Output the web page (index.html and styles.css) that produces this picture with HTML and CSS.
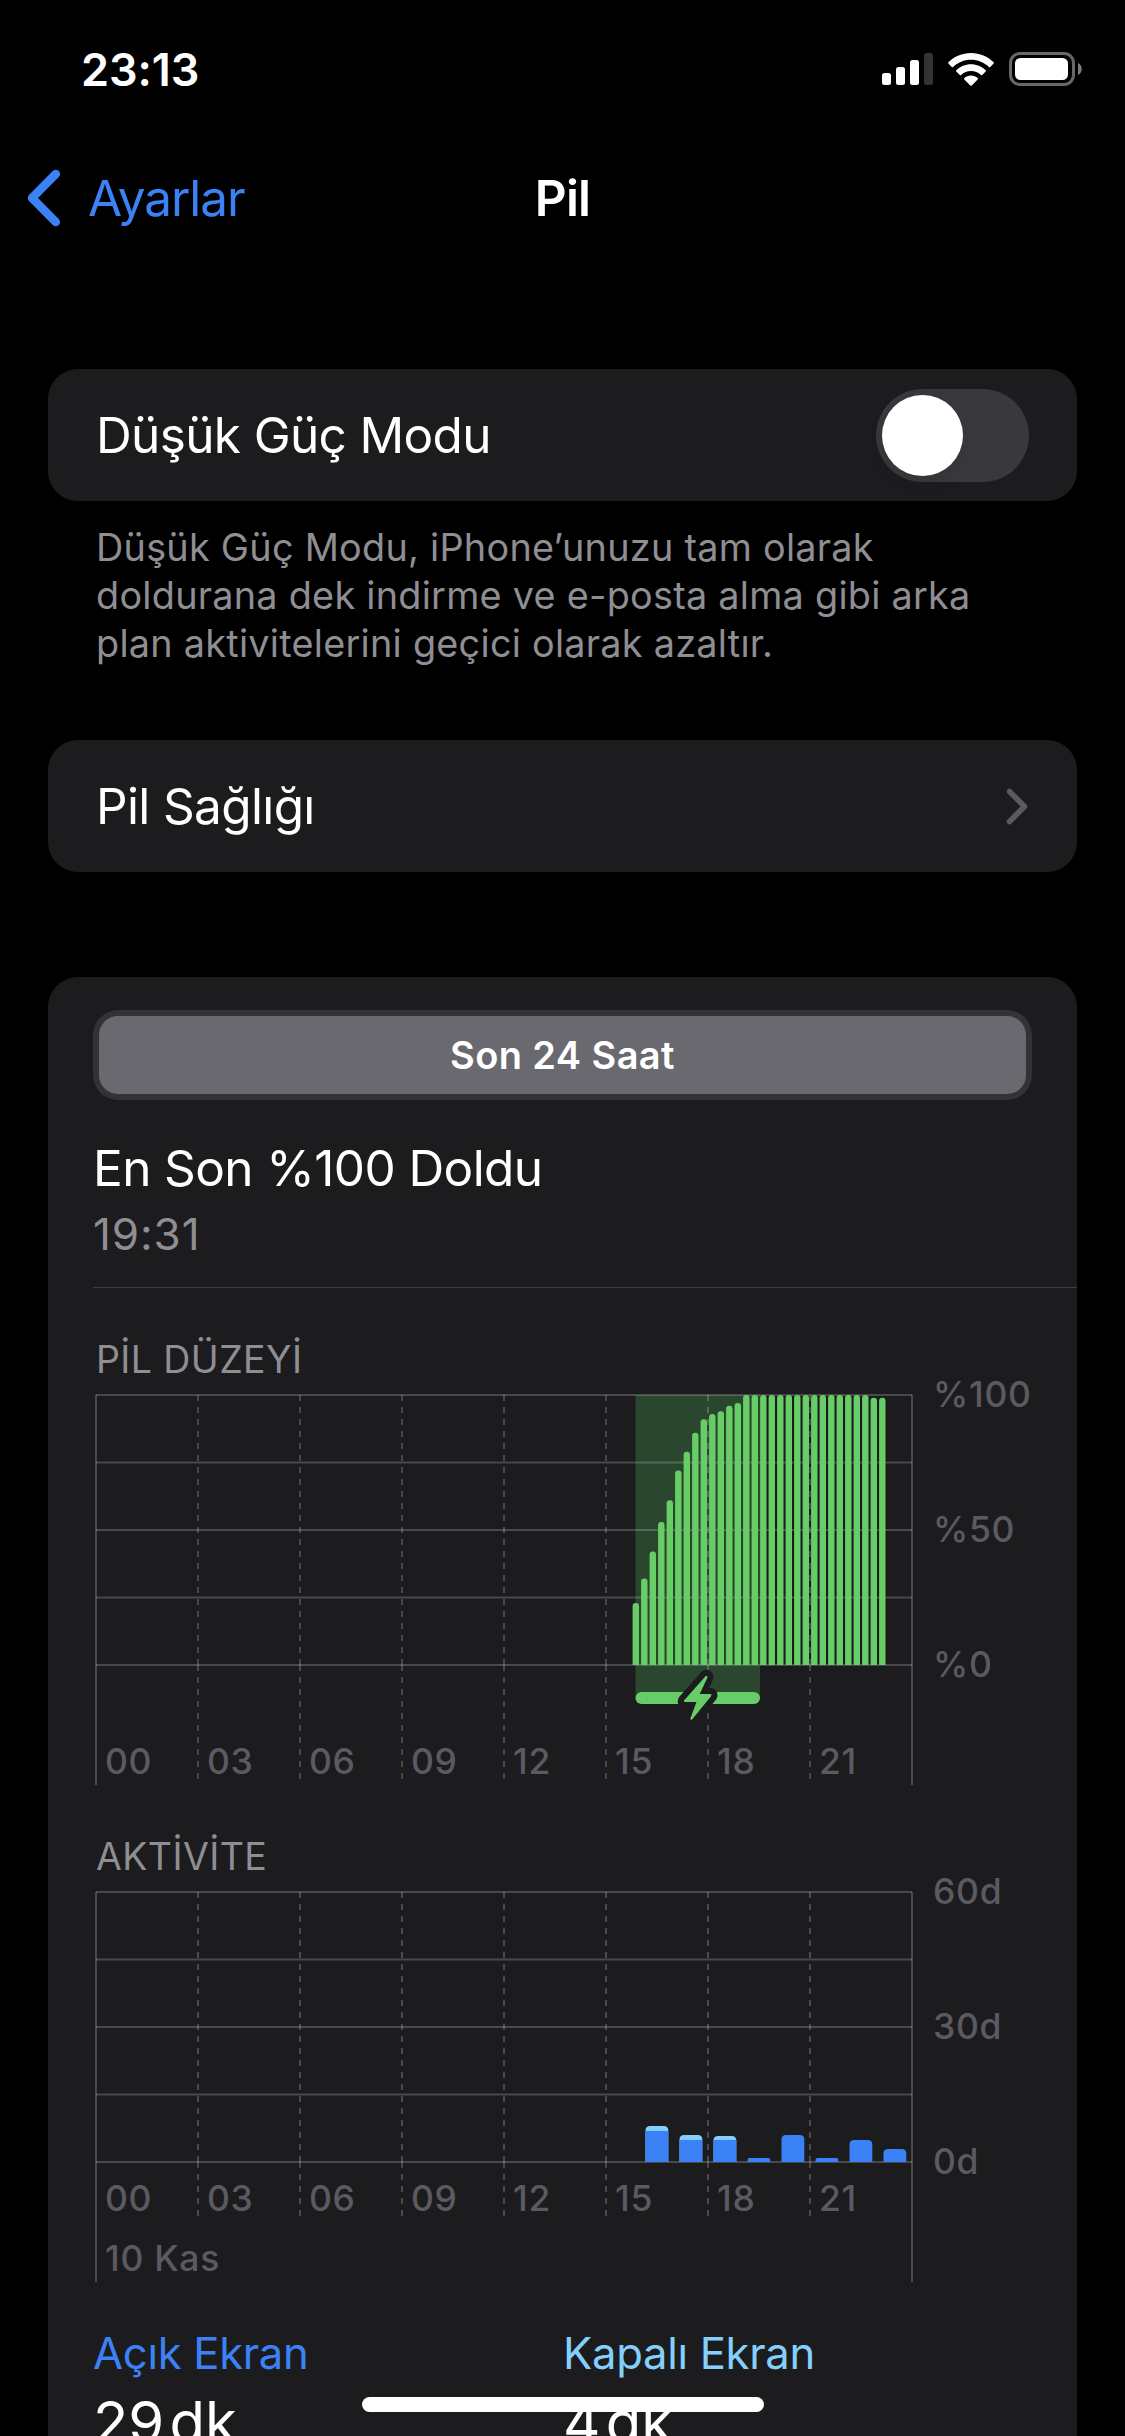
FILE: index.html
```html
<!DOCTYPE html>
<html lang="tr">
<head>
  <meta charset="UTF-8" />
  <title>Pil</title>
  <meta name="viewport" content="width=device-width, initial-scale=1.0" />
  <link rel="stylesheet" href="styles.css">
</head>
<body>
  <header class="status-bar">
    <span class="time">23:13</span>
    <div class="status-icons">
      <svg class="signal" width="51" height="32" viewBox="0 0 51 32" fill="#fff">
        <rect x="0" y="20" width="9" height="12" rx="2.5" />
        <rect x="14" y="14" width="9" height="18" rx="2.5" />
        <rect x="28" y="7" width="9" height="25" rx="2.5" />
        <rect x="42" y="0" width="9" height="32" rx="2.5" fill="#333" />
      </svg>
      <svg class="wifi" width="46" height="33" viewBox="0 0 46 33" fill="#fff">
        <path d="M23 0C31.800 0 39.800 3.500 45.600 9.200Q46.200 9.900 45.600 10.600L42.300 13.900Q41.600 14.500 40.900 13.900C36.200 9.400 30 6.700 23 6.700S9.800 9.400 5.100 13.900Q4.400 14.500 3.700 13.900L.4 10.600Q-.2 9.900.4 9.200C6.200 3.500 14.200 0 23 0Z" />
        <path d="M23 11.200C28.700 11.200 33.900 13.500 37.700 17.200Q38.300 17.900 37.700 18.500L34.200 22Q33.600 22.500 32.900 22C30.300 19.500 26.800 18 23 18S15.700 19.500 13.100 22Q12.400 22.500 11.800 22L8.300 18.500Q7.700 17.900 8.300 17.200C12.100 13.500 17.300 11.200 23 11.200Z" />
        <path d="M23 22.500C25.600 22.500 28 23.500 29.700 25.100Q30.300 25.800 29.700 26.400L23.700 32.500Q23 33.100 22.300 32.500L16.300 26.400Q15.700 25.800 16.300 25.100C18 23.500 20.400 22.500 23 22.500Z" />
      </svg>
      <svg class="battery" width="73" height="34" viewBox="0 0 73 34">
        <rect x="1.500" y="1.500" width="63" height="31" rx="9.500" fill="none" stroke="#686868" stroke-width="3" />
        <rect x="6" y="6" width="53" height="22" rx="5.500" fill="#fff" />
        <path d="M69 11C74 13 74 21 69 23Z" fill="#7a7a7a" />
      </svg>
    </div>
  </header>

  <nav class="nav-bar">
    <a class="back">
      <svg width="34" height="58" viewBox="0 0 34 58">
        <path d="M28.800 5L5 29L28.800 53" fill="none" stroke="#3c82f7" stroke-width="8.500" stroke-linecap="round" stroke-linejoin="round" />
      </svg>
      <span>Ayarlar</span>
    </a>
    <h1>Pil</h1>
  </nav>

  <main>
    <section class="card row">
      <span class="row-title">Düşük Güç Modu</span>
      <span class="switch"><span class="knob"></span></span>
    </section>
    <p class="footnote">Düşük Güç Modu, iPhone’unuzu tam olarak<br>doldurana dek indirme ve e-posta alma gibi arka<br>plan aktivitelerini geçici olarak azaltır.</p>

    <section class="card row">
      <span class="row-title">Pil Sağlığı</span>
      <svg class="chevron" width="22" height="37" viewBox="0 0 22 37">
        <path d="M3.500 3.500L18.500 18.500L3.500 33.500" fill="none" stroke="#5a5a5f" stroke-width="5.500" stroke-linecap="round" stroke-linejoin="round" />
      </svg>
    </section>

    <section class="card usage">
      <div class="segmented"><div class="segment">Son 24 Saat</div></div>

      <div class="last-charge">
        <div class="charge-title">En Son %100 Doldu</div>
        <div class="charge-time">19:31</div>
      </div>

      <h2 class="level-title">PİL DÜZEYİ</h2>
      <svg class="chart" id="levelChart" width="984" height="405" viewBox="0 0 984 405"></svg>

      <h2 class="activity-title">AKTİVİTE</h2>
      <svg class="chart" id="activityChart" width="984" height="405" viewBox="0 0 984 405"></svg>

      <div class="totals">
        <div class="total screen-on">
          <div class="total-label">Açık Ekran</div>
          <div class="total-value">29&#8202;dk</div>
        </div>
        <div class="total screen-off">
          <div class="total-label">Kapalı Ekran</div>
          <div class="total-value">4&#8202;dk</div>
        </div>
      </div>
    </section>
  </main>

  <div class="home-indicator"></div>

  <script>
    const LEFT = 3, TOP = 15, WIDTH = 816, HEIGHT = 270;
    const STEP = WIDTH / 8;
    const BASE = TOP + HEIGHT;

    // one value per 15 minutes, starting at 15:45
    const levels = [23, 32, 42, 53, 61, 72, 79, 86, 91, 93, 94, 96, 97,
      100, 100, 100, 100, 100, 100, 100, 100, 100, 100, 100, 100, 100, 100, 100, 99, 99];

    // minutes per hour from 16:00: [screen on, screen off]
    const activity = [[6.9, 1.1], [4.9, 1.1], [4.9, 0.9], [0.9, 0], [6, 0], [0.9, 0], [4.9, 0], [2.9, 0]];

    function grid(labels, dashEnd, sideEnd, hourY) {
      let out = "";
      for (let i = 0; i <= 4; i++) {
        const y = TOP + i * HEIGHT / 4;
        out += `<line class="grid" x1="${LEFT}" x2="${LEFT + WIDTH}" y1="${y}" y2="${y}" />`;
      }
      for (let i = 0; i <= 8; i++) {
        const x = LEFT + i * STEP;
        if (i === 0 || i === 8) {
          out += `<line class="grid" x1="${x}" x2="${x}" y1="${TOP}" y2="${sideEnd}" />`;
        } else {
          out += `<line class="grid dashed" x1="${x}" x2="${x}" y1="${TOP}" y2="${BASE}" />`;
          out += `<line class="grid dashed" x1="${x}" x2="${x}" y1="${BASE}" y2="${dashEnd}" />`;
        }
        if (i < 8) {
          const hour = String(i * 3).padStart(2, "0");
          out += `<text class="axis" x="${x + 9}" y="${hourY}">${hour}</text>`;
        }
      }
      labels.forEach((label, i) => {
        out += `<text class="axis" x="840" y="${TOP + 12 + i * HEIGHT / 2}">${label}</text>`;
      });
      return out;
    }

    function topRounded(x, y, w, h, r, cls) {
      return `<path class="${cls}" d="M${x} ${y + h}V${y + r}Q${x} ${y} ${x + r} ${y}H${x + w - r}Q${x + w} ${y} ${x + w} ${y + r}V${y + h}Z" />`;
    }

    function drawLevels() {
      let out = `<rect class="charging" x="542.5" y="${TOP}" width="124.5" height="303" />`;
      out += grid(["%100", "%50", "%0"], 399, 405, 394);
      levels.forEach((v, i) => {
        const h = v / 100 * HEIGHT;
        out += topRounded(539.6 + i * 8.5, BASE - h, 6.4, h, 3, "level");
      });
      out += `<rect class="level" x="542.5" y="312" width="124.5" height="12" rx="6" />`;
      const bolt = "M612.500 296.300L591 320.500Q590.200 322 592 322H603.500L597.400 338.500Q597.500 340.600 599.300 339.200L618.200 316Q619.200 314.200 617.300 314H606.700L614.500 297.500Q614.500 295 612.500 296.300Z";
      out += `<path class="bolt-outline" d="${bolt}" /><path class="level" d="${bolt}" />`;
      document.getElementById("levelChart").innerHTML = out;
    }

    function drawActivity() {
      let out = grid(["60d", "30d", "0d"], 339, 405, 334);
      activity.forEach(([on, off], i) => {
        const x = 552.5 + i * 34;
        const onH = on * 4.5;
        const total = (on + off) * 4.5;
        out += topRounded(x, BASE - total, 22.8, total, Math.min(4.5, total / 2), off ? "off" : "on");
        if (off) out += `<rect class="on" x="${x}" y="${BASE - onH}" width="22.8" height="${onH}" />`;
      });
      out += `<text class="axis" x="${LEFT + 9}" y="394">10 Kas</text>`;
      document.getElementById("activityChart").innerHTML = out;
    }

    drawLevels();
    drawActivity();
  </script>
</body>
</html>
```

FILE: styles.css
```css
* { box-sizing: border-box; }

html, body {
  margin: 0;
  padding: 0;
  background: #000;
  color: #fff;
  font-family: Inter, "Liberation Sans", sans-serif;
}

body {
  width: 1125px;
  height: 2436px;
  overflow: hidden;
  position: relative;
}

svg { display: block; flex: none; overflow: visible; }

.status-bar {
  height: 138px;
  display: flex;
  justify-content: space-between;
  align-items: center;
  padding: 0 43px 0 81px;
}

.time {
  font-size: 45px;
  font-weight: 600;
  letter-spacing: -0.1px;
}

.status-icons {
  display: flex;
  align-items: center;
}

.wifi { margin-left: 15px; }
.battery { margin-left: 15px; }

.nav-bar {
  height: 120px;
  display: grid;
  grid-template-columns: 1fr auto 1fr;
  align-items: center;
  padding: 0 27px;
  font-size: 49.5px;
}

.back {
  display: flex;
  align-items: center;
  gap: 27px;
  color: #3c82f7;
  letter-spacing: -1.05px;
}

h1 {
  margin: 0;
  font-size: 49.5px;
  font-weight: 600;
  letter-spacing: -0.8px;
}

main {
  padding: 111px 48px 0;
}

.card {
  background: #1c1c1e;
  border-radius: 30px;
}

.row {
  height: 132px;
  display: flex;
  align-items: center;
  justify-content: space-between;
  padding: 0 48px;
}

.row-title {
  font-size: 49.5px;
  letter-spacing: -0.64px;
}

.chevron { margin-right: 1px; }

.switch {
  width: 153px;
  height: 93px;
  padding: 6px;
  border-radius: 47px;
  background: #39393d;
}

.knob {
  display: block;
  width: 81px;
  height: 81px;
  border-radius: 50%;
  background: #fff;
  box-shadow: 0 6px 16px rgba(0, 0, 0, 0.08);
}

.footnote {
  margin: 22px 0 0;
  padding: 0 48px;
  height: 217px;
  font-size: 37.8px;
  line-height: 48px;
  letter-spacing: 0.26px;
  color: #8e8e93;
  white-space: nowrap;
}

.usage {
  margin-top: 105px;
  height: 1600px;
  padding: 33px 0 0 45px;
}

.segmented {
  width: 939px;
  height: 90px;
  padding: 6px;
  border-radius: 25px;
  background: #323237;
}

.segment {
  height: 78px;
  line-height: 78px;
  border-radius: 19px;
  background: #6a696f;
  text-align: center;
  font-size: 38px;
  font-weight: 600;
  letter-spacing: 0.4px;
}

.last-charge {
  height: 188px;
  padding-top: 38px;
  border-bottom: 1px solid #3d3d41;
}

.charge-title {
  font-size: 49.5px;
  line-height: 60px;
  letter-spacing: -0.6px;
}

.charge-time {
  margin-top: 9px;
  font-size: 44px;
  line-height: 54px;
  letter-spacing: 0.9px;
  color: #8e8e93;
}

h2 {
  margin: 0;
  padding-left: 3px;
  font-size: 37.5px;
  font-weight: 400;
  line-height: 46px;
  letter-spacing: 0.4px;
  color: #8e8e93;
}

.level-title { margin-top: 49px; }
.activity-title { margin-top: 49px; }

.chart { margin-top: -3px; }

.grid {
  stroke: rgba(255, 255, 255, 0.2);
  stroke-width: 2;
}

.dashed { stroke-dasharray: 6 6; }

.axis {
  font-size: 35.5px;
  font-weight: 500;
  letter-spacing: 0.7px;
  fill: #5b5a60;
}

.charging { fill: #2b462e; }
.level { fill: #67ce67; }

.bolt-outline {
  fill: #1c1c1e;
  stroke: #1c1c1e;
  stroke-width: 12;
  stroke-linejoin: round;
}

.on { fill: #3c82f7; }
.off { fill: #84cffb; }

.totals {
  display: grid;
  grid-template-columns: 470px 1fr;
  margin-top: 45px;
}

.total-label {
  font-size: 43.6px;
  line-height: 54px;
  letter-spacing: -0.3px;
}

.screen-on .total-label { color: #3c82f7; }
.screen-off .total-label { color: #84cffb; }

.total-value {
  font-size: 58px;
  line-height: 70px;
  margin-top: 6px;
}

.home-indicator {
  position: absolute;
  left: 362px;
  bottom: 24px;
  width: 402px;
  height: 15px;
  border-radius: 8px;
  background: #fff;
}
```
